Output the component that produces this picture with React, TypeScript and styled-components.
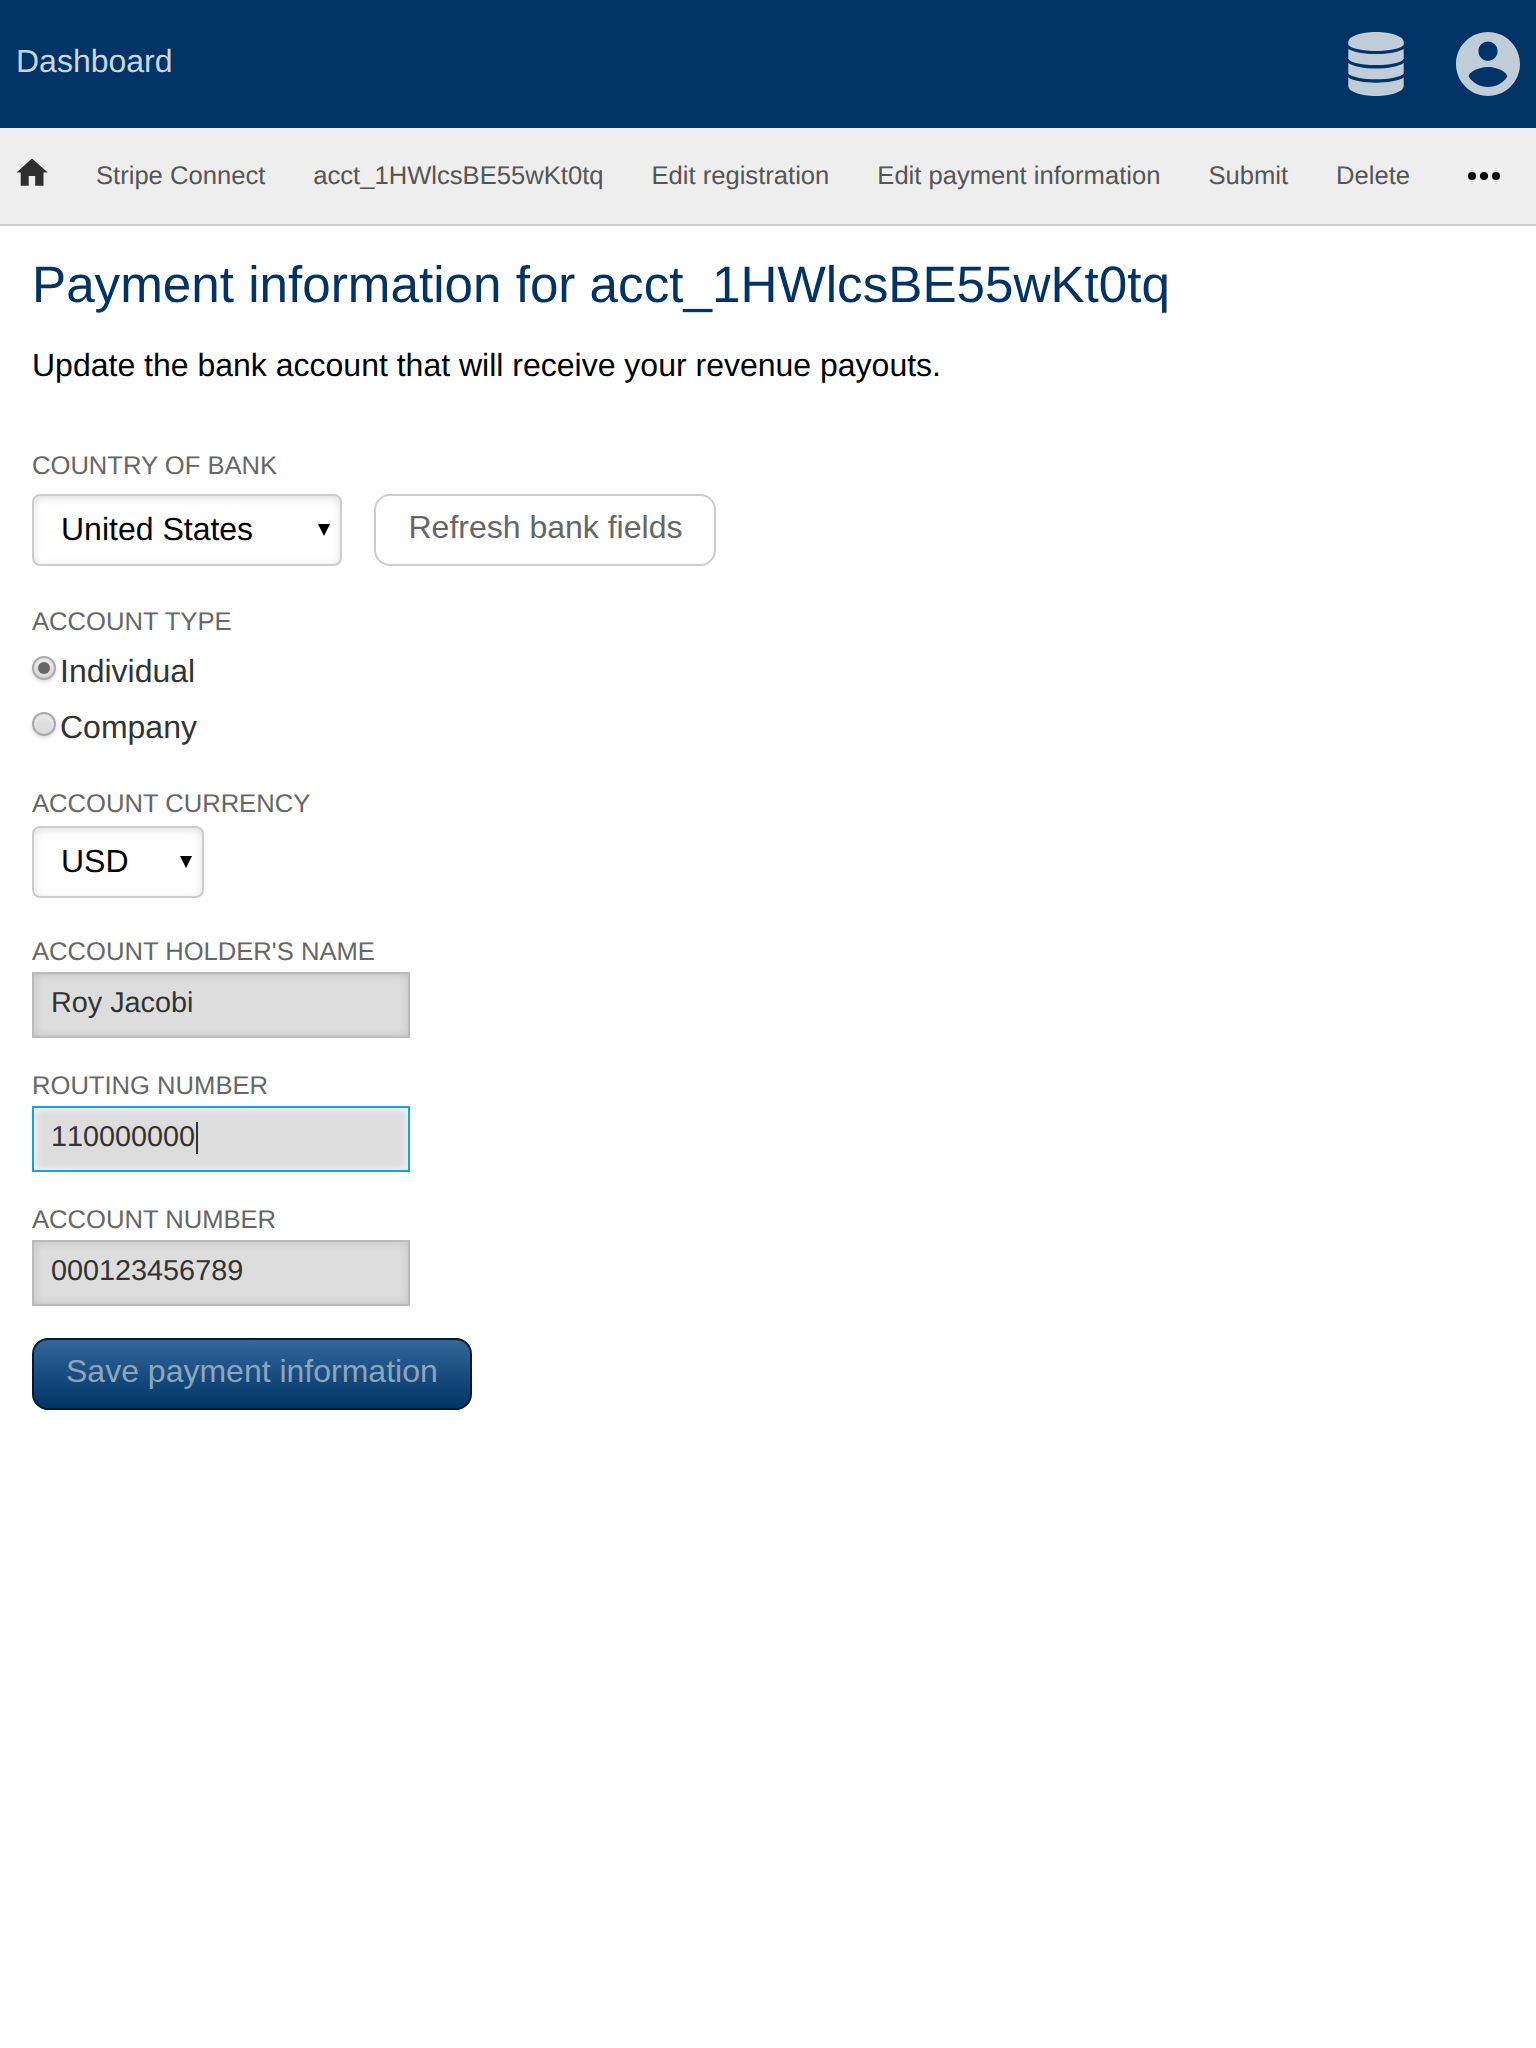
import React from "react";
import styled, { createGlobalStyle, css } from "styled-components";

const Global = createGlobalStyle`
  * { box-sizing: border-box; }
  body {
    margin: 0;
    background: #fff;
    font-family: "Liberation Sans", Arial, sans-serif;
    text-rendering: geometricPrecision;
  }
`;

const Page = styled.div`
  min-height: 2048px;
  background: #fff;
`;

const Header = styled.header`
  display: flex;
  align-items: center;
  gap: 52px;
  height: 128px;
  padding: 0 16px;
  background: #003366;
`;

const Brand = styled.span`
  flex: 1;
  padding-bottom: 6px;
  color: #cad5df;
  font-size: 32px;
  line-height: 36px;
`;

const Nav = styled.nav`
  display: flex;
  align-items: flex-start;
  gap: 48px;
  height: 98px;
  padding: 34px 36px 0 16px;
  background: #eee;
  border-bottom: 2px solid #ccc;
`;

const NavLink = styled.span`
  color: #555;
  font-size: 25.6px;
  line-height: 28px;
  white-space: nowrap;
`;

const HomeIcon = styled.svg`
  display: block;
  width: 32px;
  height: 28px;
  margin-top: -4px;
`;

const Dots = styled.div`
  display: flex;
  gap: 4px;
  margin: 10px 0 0 auto;
`;

const Dot = styled.i`
  width: 8px;
  height: 8px;
  border-radius: 50%;
  background: #000;
`;

const Main = styled.main`
  padding: 30px 32px;
`;

const Title = styled.h1`
  margin: 0 0 34px;
  color: #003366;
  font-size: 51.2px;
  font-weight: 400;
  line-height: 57px;
`;

const Intro = styled.p`
  margin: 0 0 68px;
  font-size: 32px;
  line-height: 36px;
`;

const Field = styled.div<{ $gap: number; $after: number }>`
  display: flex;
  flex-direction: column;
  align-items: flex-start;
  gap: ${(p) => p.$gap}px;
  margin-bottom: ${(p) => p.$after}px;
`;

const Label = styled.span`
  color: #666;
  font-size: 25.6px;
  line-height: 30px;
  text-transform: uppercase;
`;

const Controls = styled.div`
  display: flex;
  gap: 32px;
`;

const SelectBox = styled.div<{ $width: number }>`
  display: flex;
  justify-content: space-between;
  width: ${(p) => p.$width}px;
  height: 72px;
  padding: 15px 10px 0 27px;
  border: 2px solid #ccc;
  border-radius: 8px;
  box-shadow: inset 0 2px 8px rgba(0, 0, 0, 0.13);
  font-size: 32px;
  line-height: 36px;
`;

const Arrow = styled.i`
  width: 0;
  height: 0;
  margin-top: 13px;
  border: solid transparent;
  border-width: 12px 6px 0;
  border-top-color: #000;
`;

const Button = styled.button<{ $primary?: boolean }>`
  display: flex;
  align-items: flex-start;
  height: 72px;
  padding: 13px 31.5px 0 32.5px;
  border: 2px solid #ccc;
  border-radius: 16px;
  background: #fff;
  color: #666;
  font: 32px / 36px "Liberation Sans", Arial, sans-serif;
  white-space: nowrap;
  ${(p) =>
    p.$primary &&
    css`
      padding: 13px 32px 0;
      border-color: #001933;
      background: linear-gradient(#336699, #003366);
      color: #8ca6bf;
    `}
`;

const Options = styled.div`
  display: flex;
  flex-direction: column;
  gap: 20px;
`;

const Option = styled.label`
  display: flex;
  align-items: flex-start;
  gap: 4px;
  color: #333;
  font-size: 32px;
  line-height: 36px;
`;

const Radio = styled.span`
  display: flex;
  align-items: center;
  justify-content: center;
  width: 24px;
  height: 24px;
  margin-top: 3px;
  border: 2px solid #aaa;
  border-radius: 50%;
  background: #ddd;
  box-shadow: 0 2px 4px rgba(0, 0, 0, 0.12), inset 0 4px 4px rgba(255, 255, 255, 0.4);
`;

const RadioDot = styled.i`
  width: 12px;
  height: 12px;
  border-radius: 50%;
  background: #666;
`;

const TextBox = styled.div<{ $focused?: boolean }>`
  display: flex;
  width: 378px;
  height: 66px;
  padding: 13px 17px 0;
  border: 2px solid ${(p) => (p.$focused ? "#179fe8" : "#bbb")};
  background: #ddd;
  box-shadow: inset 0 0 ${(p) => (p.$focused ? "8px #fff" : "10px rgba(0, 0, 0, 0.13)")};
  color: #333;
  font-size: 28.8px;
  font-kerning: none;
  line-height: 32px;
`;

const Caret = styled.i`
  width: 2px;
  height: 32px;
  margin: 1px 0 0 1px;
  background: #333;
`;

const links = [
  "Stripe Connect",
  "acct_1HWlcsBE55wKt0tq",
  "Edit registration",
  "Edit payment information",
  "Submit",
  "Delete",
];

const DatabaseIcon = () => (
  <svg width="56" height="64" viewBox="0 0 56 64" fill="#c0ccd8">
    <path d="M28 0C43.500 0 55.700 4.500 55.700 10V13C53 16.500 41 19 28 19S3 16.500 .3 13V10C.3 4.500 12.500 0 28 0Z" />
    <path d="M.3 17C5 20 16 22 28 22S51 20 55.700 17V27C53 31 41 33 28 33S3 31 .3 27Z" />
    <path d="M.3 31C5 34.500 16 36.500 28 36.500S51 34.500 55.700 31V41.500C53 45 41 47.300 28 47.300S3 45 .3 41.500Z" />
    <path d="M.3 45.500C5 48.700 16 50.700 28 50.700S51 48.700 55.700 45.500V54C55.700 59.500 43.500 64 28 64S.3 59.500 .3 54Z" />
  </svg>
);

const AccountIcon = () => (
  <svg width="64" height="64" viewBox="2 2 20 20" fill="#c0ccd8">
    <path d="M12 2C6.480 2 2 6.480 2 12s4.480 10 10 10 10-4.480 10-10S17.520 2 12 2zm0 3c1.660 0 3 1.340 3 3s-1.340 3-3 3-3-1.340-3-3 1.340-3 3-3zm0 14.200c-2.500 0-4.710-1.280-6-3.220.030-1.990 4-3.080 6-3.080 1.990 0 5.970 1.090 6 3.080-1.290 1.940-3.500 3.220-6 3.220z" />
  </svg>
);

export default function App() {
  return (
    <Page>
      <Global />
      <Header>
        <Brand>Dashboard</Brand>
        <DatabaseIcon />
        <AccountIcon />
      </Header>
      <Nav>
        <HomeIcon viewBox="0 0 32 28" fill="#2e2e2e">
          <path d="M16 0.500 31.700 14.500H27.500V27.700H19.200V18H12.700V27.700H4.700V14.500H0.500Z" />
        </HomeIcon>
        {links.map((text) => (
          <NavLink key={text}>{text}</NavLink>
        ))}
        <Dots>
          <Dot />
          <Dot />
          <Dot />
        </Dots>
      </Nav>
      <Main>
        <Title>Payment information for acct_1HWlcsBE55wKt0tq</Title>
        <Intro>Update the bank account that will receive your revenue payouts.</Intro>
        <Field $gap={13} $after={41}>
          <Label>Country of bank</Label>
          <Controls>
            <SelectBox $width={310}>
              United States
              <Arrow />
            </SelectBox>
            <Button>Refresh bank fields</Button>
          </Controls>
        </Field>
        <Field $gap={16} $after={44}>
          <Label>Account type</Label>
          <Options>
            <Option>
              <Radio>
                <RadioDot />
              </Radio>
              Individual
            </Option>
            <Option>
              <Radio />
              Company
            </Option>
          </Options>
        </Field>
        <Field $gap={7} $after={39}>
          <Label>Account currency</Label>
          <SelectBox $width={172}>
            USD
            <Arrow />
          </SelectBox>
        </Field>
        <Field $gap={5} $after={33}>
          <Label>Account holder's name</Label>
          <TextBox>Roy Jacobi</TextBox>
        </Field>
        <Field $gap={5} $after={33}>
          <Label>Routing number</Label>
          <TextBox $focused>
            110000000
            <Caret />
          </TextBox>
        </Field>
        <Field $gap={5} $after={32}>
          <Label>Account number</Label>
          <TextBox>000123456789</TextBox>
        </Field>
        <Button $primary>Save payment information</Button>
      </Main>
    </Page>
  );
}
